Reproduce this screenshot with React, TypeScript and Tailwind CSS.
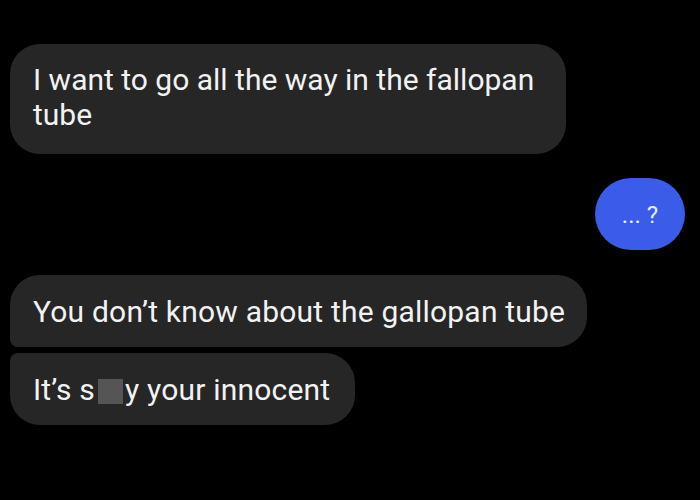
const FONT = "font-['Roboto','Liberation_Sans',sans-serif]"

function Received({
  children,
  corners,
  className = '',
}: {
  children: React.ReactNode
  corners: string
  className?: string
}) {
  return (
    <div
      className={`bg-[#262626] text-[#f2f2f2] text-[30px] leading-[35px] pl-[23px] pr-[22px] ${corners} ${className}`}
    >
      {children}
    </div>
  )
}

export default function App() {
  return (
    <div className={`w-[700px] h-[500px] bg-black overflow-hidden ${FONT}`}>
      <div className="flex flex-col items-start px-[10px] pt-[44px]">
        <Received corners="rounded-[30px]" className="w-[556px] h-[110px] pt-[18px]">
          I want to go all the way in the fallopan
          <br />
          tube
        </Received>

        <div className="self-stretch flex justify-end mt-[24px] pr-[5px]">
          <div className="w-[90px] h-[72px] rounded-[36px] bg-[#3b5ce8] flex items-center justify-center text-[#e8ecff] text-[24px] pt-[2px]">
            ... ?
          </div>
        </div>

        <Received
          corners="rounded-[30px] rounded-bl-[8px]"
          className="mt-[25px] w-[577px] h-[72px] flex items-center whitespace-nowrap tracking-[0.2px]"
        >
          You don’t know about the gallopan tube
        </Received>

        <Received
          corners="rounded-[30px] rounded-tl-[8px]"
          className="mt-[6px] w-[345px] h-[72px] flex items-center whitespace-nowrap tracking-[0.2px]"
        >
          It’s s
          <span className="inline-block w-[25px] h-[25px] bg-[#555555] ml-[3px] mr-[2px] mt-[4px]" />
          y your innocent
        </Received>
      </div>
    </div>
  )
}
